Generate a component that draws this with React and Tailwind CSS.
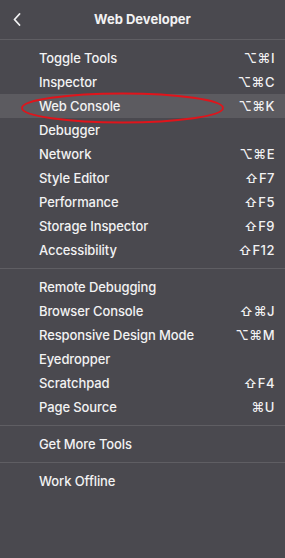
import React from "react";

const groups = [
  [
    ["Toggle Tools", "⌥⌘I"],
    ["Inspector", "⌥⌘C"],
    ["Web Console", "⌥⌘K", true],
    ["Debugger", ""],
    ["Network", "⌥⌘E"],
    ["Style Editor", "⇧F7"],
    ["Performance", "⇧F5"],
    ["Storage Inspector", "⇧F9"],
    ["Accessibility", "⇧F12"],
  ],
  [
    ["Remote Debugging", ""],
    ["Browser Console", "⇧⌘J"],
    ["Responsive Design Mode", "⌥⌘M"],
    ["Eyedropper", ""],
    ["Scratchpad", "⇧F4"],
    ["Page Source", "⌘U"],
  ],
  [["Get More Tools", ""]],
  [["Work Offline", ""]],
];

const Row = ({ label, keys, active }) => (
  <div
    className={`flex h-6 items-center justify-between pt-[2px] pl-[39px] pr-[10px] ${
      active ? "bg-[#5c5b60]" : ""
    }`}
  >
    <span className="tracking-[-0.1px]">{label}</span>
    {keys && <span className="tracking-[0.5px]">{keys}</span>}
  </div>
);

export default function App() {
  return (
    <div className="relative h-[558px] w-[285px] bg-[#4a494f] text-[13px] font-medium text-[#f2f2f3] font-['Inter','Liberation_Sans',sans-serif]">
      {/* header */}
      <div className="relative flex h-[40px] items-center justify-center border-b border-[#5f5e63]">
        <svg
          className="absolute left-[13px] top-[13px]"
          width="8"
          height="13"
          viewBox="0 0 8 13"
          fill="none"
        >
          <path d="M6.5 1L1.5 6.5L6.5 12" stroke="#f2f2f3" strokeWidth="1.8" strokeLinecap="round" strokeLinejoin="round" />
        </svg>
        <span className="font-bold">Web Developer</span>
      </div>

      {groups.map((g, i) => (
        <div key={i} className={`py-[6px] ${i < groups.length - 1 ? "border-b border-[#5f5e63]" : ""}`}>
          {g.map(([label, keys, active]) => (
            <Row key={label} label={label} keys={keys} active={active} />
          ))}
        </div>
      ))}

      {/* annotation */}
      <svg className="absolute left-0 top-0 pointer-events-none" width="285" height="558">
        <ellipse cx="122.5" cy="108" rx="100.5" ry="14.5" fill="none" stroke="#e0141b" strokeWidth="1.8" />
      </svg>
    </div>
  );
}
